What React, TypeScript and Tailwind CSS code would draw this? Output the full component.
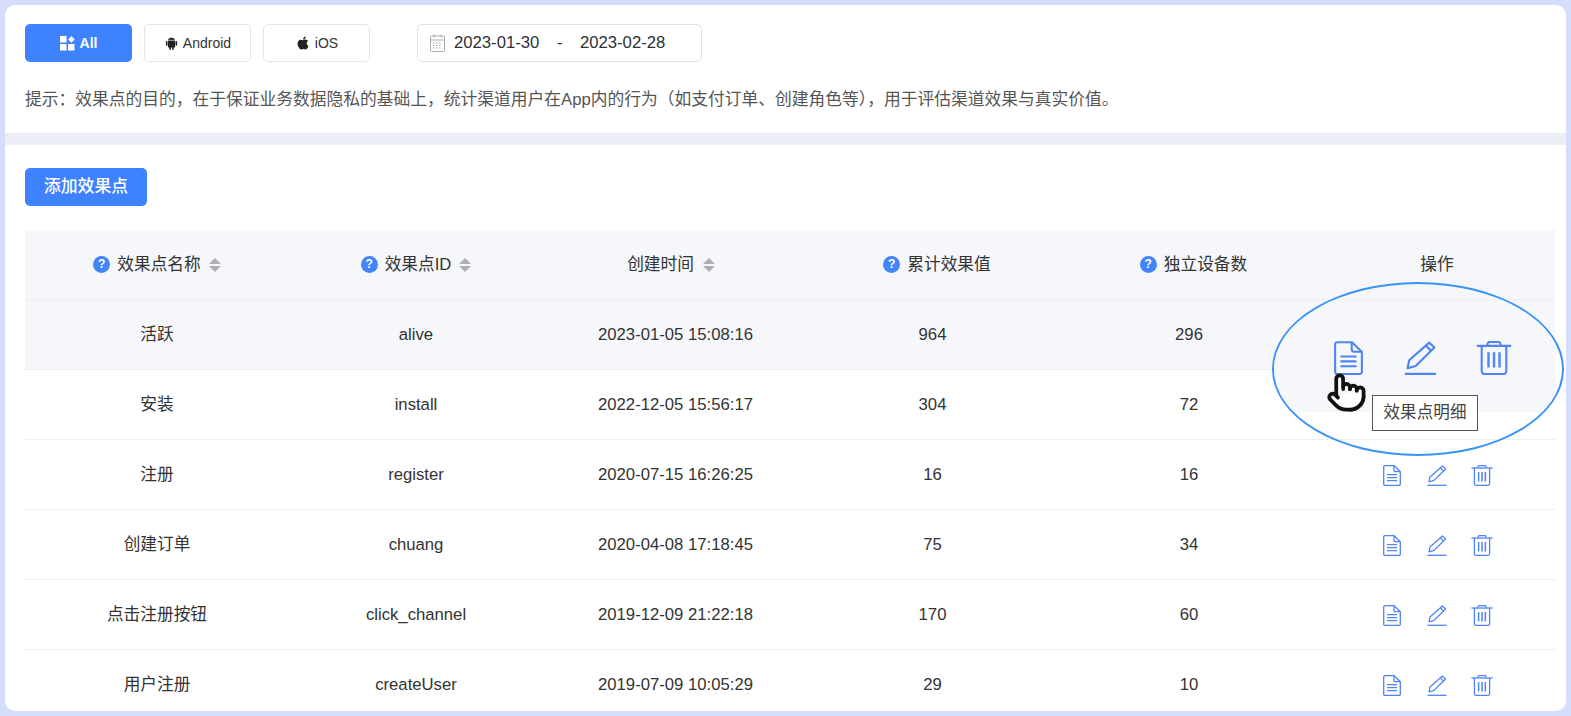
import { AiFillAndroid, AiFillApple } from "react-icons/ai";
import { Pointer } from "lucide-react";

const rows = [
  { name: "活跃", id: "alive", time: "2023-01-05 15:08:16", total: 964, devices: 296 },
  { name: "安装", id: "install", time: "2022-12-05 15:56:17", total: 304, devices: 72 },
  { name: "注册", id: "register", time: "2020-07-15 16:26:25", total: 16, devices: 16 },
  { name: "创建订单", id: "chuang", time: "2020-04-08 17:18:45", total: 75, devices: 34 },
  { name: "点击注册按钮", id: "click_channel", time: "2019-12-09 21:22:18", total: 170, devices: 60 },
  { name: "用户注册", id: "createUser", time: "2019-07-09 10:05:29", total: 29, devices: 10 },
];

function DocIcon({ className }: { className: string }) {
  return (
    <svg viewBox="0 0 18 21" fill="none" stroke="#4f84f6" strokeWidth="1.3" className={className}>
      <path d="M2 .7h9.2l6.1 6v12.5a1.2 1.2 0 0 1-1.2 1.2H2a1.3 1.3 0 0 1-1.3-1.2V2A1.3 1.3 0 0 1 2 .7Z" />
      <path d="M11 .8v4.4a1.4 1.4 0 0 0 1.4 1.4h4.8" />
      <path d="M4 9.6h10M4 12.6h10M4 15.6h10" />
    </svg>
  );
}

function PencilIcon({ className }: { className: string }) {
  return (
    <svg viewBox="0 0 20 21" fill="none" stroke="#4f84f6" strokeWidth="1.3" className={className}>
      <path d="M15.4 1 18.6 4 7 15.4l-5 1.4 1-4.9Z" strokeLinejoin="round" />
      <path d="m13.4 3 3.2 3.1" />
      <path d="M.4 20.3h19.2" />
    </svg>
  );
}

function TrashIcon({ className }: { className: string }) {
  return (
    <svg viewBox="0 0 22 21" fill="none" stroke="#4f84f6" strokeWidth="1.3" className={className}>
      <path d="M.4 3h21.2" />
      <path d="M7 2.8V1.9C7 1 7.7.6 8.4.6h5.2c.7 0 1.4.4 1.4 1.3v.9" />
      <path d="M3.4 3v15.6a1.8 1.8 0 0 0 1.8 1.8h11.6a1.8 1.8 0 0 0 1.8-1.8V3" />
      <path d="M7.6 7v9.4M11 7v9.4M14.4 7v9.4" strokeWidth="1.5" />
    </svg>
  );
}

function GridIcon() {
  return (
    <svg viewBox="0 0 15 15" fill="#fff" className="w-[15px] h-[15px]">
      <rect x="0" y="0" width="6.5" height="6.5" />
      <path d="M11.4 0 14.6 3.4 11.4 6.8 8.2 3.4Z" />
      <rect x="0" y="8" width="6.5" height="6.5" />
      <rect x="8" y="8" width="6.5" height="6.5" />
    </svg>
  );
}

function CalendarIcon() {
  return (
    <svg viewBox="0 0 15 18" fill="none" stroke="#a9abb2" strokeWidth="1" className="w-[15px] h-[18px]">
      <rect x=".5" y="2" width="14" height="15.5" rx="1" />
      <path d="M.5 6h14M4 .5v3M11 .5v3" />
      <path d="M3 9h9M3 11.5h9M3 14h9" strokeDasharray="1.5 1.5" />
    </svg>
  );
}

function HelpDot() {
  return (
    <span className="w-[17px] h-[17px] mt-[1px] rounded-full bg-[#4285f9] text-white text-[12px] font-bold leading-[17px] text-center shrink-0">
      ?
    </span>
  );
}

function SortArrows() {
  return (
    <svg viewBox="0 0 12 14" fill="#aeafb4" className="w-[12px] h-[14px] mt-[1px] shrink-0">
      <path d="M6 0 12 6H0Z" />
      <path d="M0 8h12l-6 6Z" />
    </svg>
  );
}

function Head({ label, help, sort, w }: { label: string; help?: boolean; sort?: boolean; w: string }) {
  return (
    <th className={`${w} font-normal`}>
      <div className="flex items-center justify-center">
        {help && <HelpDot />}
        <span className={help ? "ml-[7px]" : ""}>{label}</span>
        {sort && <span className="ml-[8px]"><SortArrows /></span>}
      </div>
    </th>
  );
}

function Filter({ children, active }: { children: React.ReactNode; active?: boolean }) {
  return (
    <button
      className={
        active
          ? "w-[107px] h-[38px] rounded-[5px] bg-[#3f82ff] text-white text-[14px] font-bold flex items-center justify-center gap-[5px]"
          : "w-[107px] h-[38px] rounded-[5px] border border-[#e3e5ea] bg-white text-[#333] text-[14px] flex items-center justify-center gap-[4px]"
      }
    >
      {children}
    </button>
  );
}

export default function App() {
  return (
    <div className="relative h-screen overflow-hidden bg-[#d6dcfc] p-[5px] [font-family:'Liberation_Sans','Noto_Sans_CJK_SC',sans-serif] text-[#333]">
      <div className="h-full overflow-hidden rounded-[10px] bg-white">
        <div className="px-[20px] pt-[19px] h-[128px]">
          <div className="flex items-center gap-[12px]">
            <Filter active>
              <GridIcon />
              All
            </Filter>
            <Filter>
              <AiFillAndroid className="text-[#222] text-[15px]" />
              <span className="pt-[1px]">Android</span>
            </Filter>
            <Filter>
              <AiFillApple className="text-[#222] text-[16px]" />
              <span className="pt-[1px]">iOS</span>
            </Filter>
            <div className="ml-[35px] w-[285px] h-[38px] rounded-[5px] border border-[#dfe1e6] flex items-center pl-[12px] text-[16.7px] text-[#303133]">
              <CalendarIcon />
              <span className="ml-[9px]">2023-01-30</span>
              <span className="mx-[17.5px]">-</span>
              <span>2023-02-28</span>
            </div>
          </div>
          <p className="mt-[25px] text-[16.75px] leading-[26px] text-[#555]">
            提示：效果点的目的，在于保证业务数据隐私的基础上，统计渠道用户在App内的行为（如支付订单、创建角色等），用于评估渠道效果与真实价值。
          </p>
        </div>
        <div className="h-[12px] bg-[#ebeef4]" />
        <div className="px-[20px] pt-[23px]">
          <button className="w-[122px] h-[38px] rounded-[5px] bg-[#3f82ff] text-white text-[16.8px] font-medium">添加效果点</button>
          <table className="mt-[24px] table-fixed w-[1530px] text-[16.7px] text-center border-collapse">
            <thead>
              <tr className="h-[69px] bg-[#f6f7fb] border-b border-[#ebeef5]">
                <Head label="效果点名称" help sort w="w-[264px]" />
                <Head label="效果点ID" help sort w="w-[254px]" />
                <th className="w-[265px] font-normal pr-[9px]">
                  <div className="flex items-center justify-center">
                    <span>创建时间</span>
                    <span className="ml-[9px]"><SortArrows /></span>
                  </div>
                </th>
                <th className="w-[249px] font-normal pl-[9px]">
                  <div className="flex items-center justify-center">
                    <HelpDot />
                    <span className="ml-[7px]">累计效果值</span>
                  </div>
                </th>
                <th className="w-[264px] font-normal pl-[9px]">
                  <div className="flex items-center justify-center">
                    <HelpDot />
                    <span className="ml-[7px]">独立设备数</span>
                  </div>
                </th>
                <th className="w-[234px] font-normal pr-[2px]">操作</th>
              </tr>
            </thead>
            <tbody>
              {rows.map((r, i) => (
                <tr key={r.id} className={i === 0 ? "h-[70px] bg-[#f6f7fb] border-b border-[#ebeef5]" : "h-[70px] border-b border-[#ebeef5]"}>
                  <td className="pt-[2px]">{r.name}</td>
                  <td className="pt-[2px]">{r.id}</td>
                  <td className="pt-[2px]">{r.time}</td>
                  <td className="pt-[2px]">{r.total}</td>
                  <td className="pt-[2px]">{r.devices}</td>
                  <td className="pt-[3px]">
                    {i > 1 && (
                      <div className="flex items-center justify-center pr-[1px]">
                        <DocIcon className="w-[18px] h-[21px]" />
                        <PencilIcon className="w-[20px] h-[21px] ml-[26px]" />
                        <TrashIcon className="w-[22px] h-[21px] ml-[24px]" />
                      </div>
                    )}
                  </td>
                </tr>
              ))}
            </tbody>
          </table>
        </div>
      </div>

      {/* zoomed-in callout over the first rows */}
      <div className="absolute left-[1272px] top-[282px] w-[292px] h-[174px] rounded-[50%] border-2 border-[#3a94f6] overflow-hidden">
        <div className="mt-[16px] h-[112px] w-[281px] bg-[#f6f7fb] flex items-start pt-[41px] pl-[60px]">
          <DocIcon className="w-[29px] h-[34px]" />
          <PencilIcon className="w-[33px] h-[34px] ml-[41px]" />
          <TrashIcon className="w-[36px] h-[34px] ml-[39px]" />
        </div>
      </div>
      <Pointer className="absolute left-[1326px] top-[372px] w-[41px] h-[41px] text-[#111]" fill="#fff" strokeWidth={2.2} />
      <div className="absolute left-[1372px] top-[395px] w-[106px] h-[36px] bg-white border border-[#555] text-[#444] text-[16.6px] leading-[34px] text-center">
        效果点明细
      </div>
    </div>
  );
}
